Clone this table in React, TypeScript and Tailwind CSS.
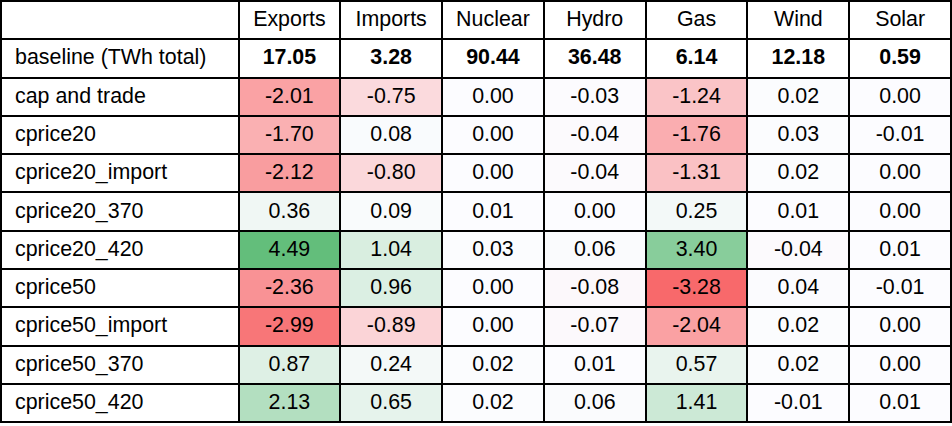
const columns = ['Exports', 'Imports', 'Nuclear', 'Hydro', 'Gas', 'Wind', 'Solar']

const baseline = ['17.05', '3.28', '90.44', '36.48', '6.14', '12.18', '0.59']

const scenarios: [string, number[]][] = [
  ['cap and trade', [-2.01, -0.75, 0.0, -0.03, -1.24, 0.02, 0.0]],
  ['cprice20', [-1.7, 0.08, 0.0, -0.04, -1.76, 0.03, -0.01]],
  ['cprice20_import', [-2.12, -0.8, 0.0, -0.04, -1.31, 0.02, 0.0]],
  ['cprice20_370', [0.36, 0.09, 0.01, 0.0, 0.25, 0.01, 0.0]],
  ['cprice20_420', [4.49, 1.04, 0.03, 0.06, 3.4, -0.04, 0.01]],
  ['cprice50', [-2.36, 0.96, 0.0, -0.08, -3.28, 0.04, -0.01]],
  ['cprice50_import', [-2.99, -0.89, 0.0, -0.07, -2.04, 0.02, 0.0]],
  ['cprice50_370', [0.87, 0.24, 0.02, 0.01, 0.57, 0.02, 0.0]],
  ['cprice50_420', [2.13, 0.65, 0.02, 0.06, 1.41, -0.01, 0.01]],
]

const all = scenarios.flatMap(([, v]) => v)
const min = Math.min(...all)
const max = Math.max(...all)

// red - white - green scale, white at zero
function cellColor(v: number): string {
  const white = [252, 252, 255]
  const target = v < 0 ? [248, 105, 107] : [99, 190, 123]
  const t = v < 0 ? v / min : v / max
  const c = white.map((w, i) => Math.round(w + t * (target[i] - w)))
  return `rgb(${c[0]}, ${c[1]}, ${c[2]})`
}

const fmt = (v: number) => (Object.is(v, -0) ? 0 : v).toFixed(2)

export default function App() {
  return (
    <div className="min-h-screen bg-white">
      <div
        className="grid w-[952px] grid-cols-[235.5px_repeat(7,1fr)] auto-rows-[36.3px] gap-[2px] bg-black p-[2px] text-[21.4px] text-black"
        style={{ fontFamily: '"Liberation Sans", Arial, Helvetica, sans-serif' }}
      >
        <div className="bg-white" />
        {columns.map((c) => (
          <div key={c} className="flex items-center justify-center bg-white pb-[2px]">
            {c}
          </div>
        ))}

        <div className="flex items-center bg-white pb-[2px] pl-[13px]">baseline (TWh total)</div>
        {baseline.map((b, i) => (
          <div key={i} className="flex items-center justify-center bg-white pb-[2px] font-bold">
            {b}
          </div>
        ))}

        {scenarios.map(([name, values]) => (
          <div key={name} className="contents">
            <div className="flex items-center bg-white pb-[2px] pl-[13px]">{name}</div>
            {values.map((v, i) => (
              <div
                key={i}
                className="flex items-center justify-center pb-[2px]"
                style={{ backgroundColor: cellColor(v) }}
              >
                {fmt(v)}
              </div>
            ))}
          </div>
        ))}
      </div>
    </div>
  )
}
